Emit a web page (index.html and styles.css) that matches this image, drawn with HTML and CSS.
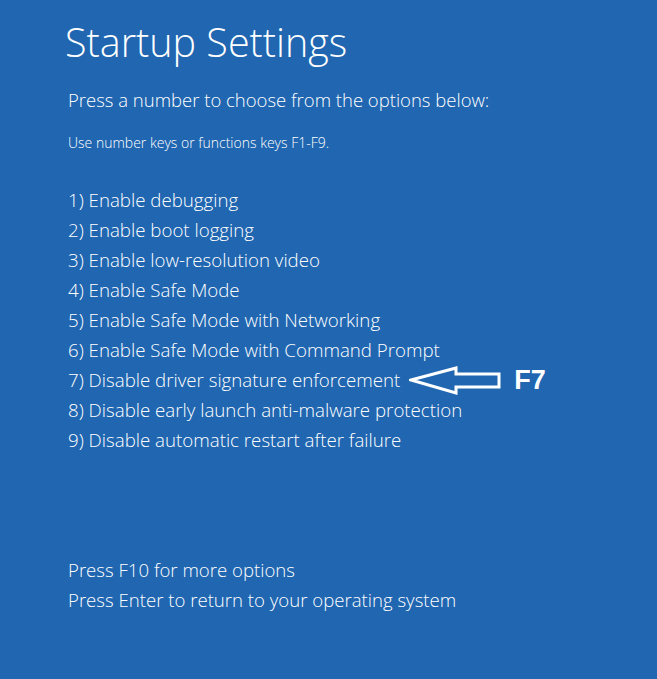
FILE: index.html
```html
<!DOCTYPE html>
<html lang="en">
<head>
    <meta charset="UTF-8">
    <title>Startup Settings</title>
    <link rel="stylesheet" href="styles.css">
</head>
<body>

<div id="screen">
    <h1 class="title">Startup Settings</h1>
    <p class="lead">Press a number to choose from the options below:</p>
    <p class="hint">Use number keys or functions keys F1-F9.</p>

    <ul class="options">
        <li>1) Enable debugging</li>
        <li>2) Enable boot logging</li>
        <li>3) Enable low-resolution video</li>
        <li>4) Enable Safe Mode</li>
        <li>5) Enable Safe Mode with Networking</li>
        <li>6) Enable Safe Mode with Command Prompt</li>
        <li class="marked">
            <span>7) Disable driver signature enforcement</span>
            <svg class="arrow" width="94" height="30" viewBox="0 0 94 30">
                <path d="M2 15 L47 3 L47 9 L90 9 L90 22 L47 22 L47 28 Z" fill="none" stroke="#fff" stroke-width="3" stroke-linejoin="miter"/>
            </svg>
            <span class="key">F7</span>
        </li>
        <li>8) Disable early launch anti-malware protection</li>
        <li>9) Disable automatic restart after failure</li>
    </ul>

    <div class="footer">
        <p>Press F10 for more options</p>
        <p>Press Enter to return to your operating system</p>
    </div>
</div>

</body>
</html>
```

FILE: styles.css
```css
body {
    margin: 0;
    padding: 0;
    background-color: #2066b1;
    font-family: 'Open Sans', 'Noto Sans', sans-serif;
    font-weight: 300;
    color: #fff;
}

#screen {
    width: 657px;
    height: 679px;
    padding: 12px 0 0 65px;
    box-sizing: border-box;
}

.title {
    margin: 0;
    font-size: 39.5px;
    font-weight: 300;
    line-height: 60px;
}

.lead {
    margin: 15px 0 0 3px;
    font-size: 18.5px;
    line-height: 26px;
}

.hint {
    margin: 21px 0 0 3px;
    font-size: 14px;
    line-height: 18px;
}

.options {
    list-style-type: none;
    margin: 33px 0 0 3px;
    padding: 0;
    font-size: 18.7px;
}

.options li {
    height: 30px;
    line-height: 30px;
    white-space: nowrap;
}

.marked {
    display: flex;
    align-items: center;
}

.arrow {
    margin-left: 9px;
}

.key {
    margin-left: 11px;
    font-family: 'Liberation Sans', Arial, sans-serif;
    font-weight: bold;
    font-size: 27px;
}

.footer {
    margin: 100px 0 0 3px;
    font-size: 18.6px;
}

.footer p {
    margin: 0;
    line-height: 30px;
}
```
